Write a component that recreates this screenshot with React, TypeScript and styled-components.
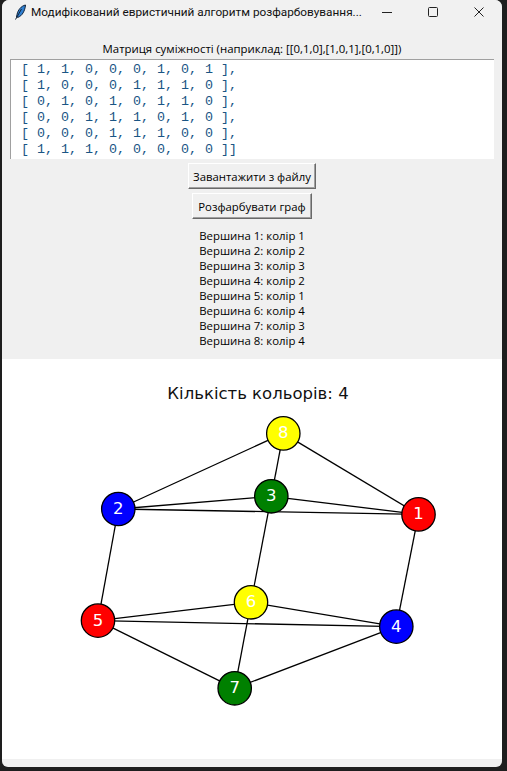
import React from "react";
import styled, { createGlobalStyle } from "styled-components";

const Global = createGlobalStyle`
  html, body { margin: 0; padding: 0; background: #1e1e1e; }
  #root { width: 507px; height: 771px; overflow: hidden; }
`;
const Screen = styled.div`
  width: 507px; height: 771px; padding: 0 5px 4px 2px; box-sizing: border-box; display: flex;
  background: #1e1e1e;
`;
const Win = styled.div`
  flex: 1; display: flex; flex-direction: column; background: #f0f0f0; border-radius: 7px 7px 6px 6px; overflow: hidden;
  font-family: "Open Sans", "Noto Sans", sans-serif; color: #000;
`;
const TitleBar = styled.div`
  height: 30px; flex: none; display: flex; align-items: center; background: #f1f1f1; padding: 0 0 6px 11px; box-sizing: border-box;
`;
const AppIcon = styled.svg`width: 14px; height: 16px; flex: none;`;
const Title = styled.div`
  margin-left: 4px; width: 346px; font-family: Roboto, "Noto Sans", sans-serif; font-size: 11.8px; white-space: nowrap; color: #111;
`;
const Ctrl = styled.svg`width: 12px; height: 12px; flex: none; margin-left: ${(p: { $ml: number }) => p.$ml}px;`;
const Body = styled.div`
  height: 329px; flex: none; display: flex; flex-direction: column; align-items: center;
`;
const Label = styled.div`
  margin-top: 10px; height: 18px; line-height: 18px; font-size: 11.4px; white-space: nowrap;
`;
const Matrix = styled.pre`
  margin: 1px 0 0 8px; align-self: flex-start; width: 484px; height: 100px; box-sizing: border-box; background: #fff;
  border-top: 1px solid #a0a0a0; border-left: 1px solid #a0a0a0; padding: 2px 0 0 10px; overflow: hidden;
  font-family: "Liberation Mono", monospace; font-size: 13.33px; line-height: 16px; color: #1a5585;
`;
const Btn = styled.button`
  display: block; height: 26px; box-sizing: border-box; margin-top: ${(p: { $mt: number; $w: number }) => p.$mt}px; width: ${(p) => p.$w}px;
  padding: 0; background: #f0f0f0; font: 11.35px "Open Sans", "Noto Sans", sans-serif; color: #000; white-space: nowrap;
  border: 1px solid; border-color: #fff #696969 #696969 #fff; box-shadow: inset -1px -1px 0 #a0a0a0;
`;
const Result = styled.div`
  margin-top: 9px; text-align: center; font-size: 11.4px; line-height: 15px; white-space: nowrap;
`;
const Canvas = styled.div`flex: none; height: 400px; background: #fff;`;
const Plot = styled.svg`display: block; width: 500px; height: 399px;`;

const rows = [
  "[ 1, 1, 0, 0, 0, 1, 0, 1 ],",
  "[ 1, 0, 0, 0, 1, 1, 1, 0 ],",
  "[ 0, 1, 0, 1, 0, 1, 1, 0 ],",
  "[ 0, 0, 1, 1, 1, 0, 1, 0 ],",
  "[ 0, 0, 0, 1, 1, 1, 0, 0 ],",
  "[ 1, 1, 1, 0, 0, 0, 0, 0 ]]",
];
const result = [1, 2, 3, 2, 1, 4, 3, 4];
const nodes: Record<number, { x: number; y: number; c: string }> = {
  1: { x: 416.5, y: 155.4, c: "#ff0000" },
  2: { x: 116.3, y: 150, c: "#0000ff" },
  3: { x: 269.3, y: 137.3, c: "#008000" },
  4: { x: 394.3, y: 267.6, c: "#0000ff" },
  5: { x: 96, y: 261.6, c: "#ff0000" },
  6: { x: 249, y: 243.3, c: "#ffff00" },
  7: { x: 232.7, y: 329.3, c: "#008000" },
  8: { x: 281.3, y: 74.4, c: "#ffff00" },
};
const edges = [[1,2],[1,3],[1,4],[1,8],[2,3],[2,5],[2,8],[3,6],[3,8],[4,5],[4,6],[4,7],[5,6],[5,7],[6,7]];

export default function App() {
  return (
    <Screen>
      <Global />
      <Win>
        <TitleBar>
          <AppIcon viewBox="0 0 14 16">
            <path d="M12.5 1C8 2 5 6 4 10.5l-.5 2.5 1.5.3C9 12 12 7 12.5 1Z" fill="#2f7fd0" stroke="#12233a" strokeWidth="1" />
            <path d="M2.5 15.5 8.5 5" stroke="#12233a" strokeWidth="1" />
          </AppIcon>
          <Title>Модифікований евристичний алгоритм розфарбовування...</Title>
          <Ctrl $ml={4} viewBox="0 0 12 12"><path d="M1 6.5h10" stroke="#222" fill="none" /></Ctrl>
          <Ctrl $ml={34} viewBox="0 0 12 12"><rect x="1.5" y="1.5" width="9" height="9" rx="1" stroke="#222" fill="none" /></Ctrl>
          <Ctrl $ml={34} viewBox="0 0 12 12"><path d="M1.5 1.5l9 9M10.5 1.5l-9 9" stroke="#222" fill="none" /></Ctrl>
        </TitleBar>
        <Body>
          <Label>Матриця суміжності (наприклад: [[0,1,0],[1,0,1],[0,1,0]])</Label>
          <Matrix>{rows.join("\n")}</Matrix>
          <Btn $mt={4} $w={128}>Завантажити з файлу</Btn>
          <Btn $mt={4} $w={120}>Розфарбувати граф</Btn>
          <Result>
            {result.map((c, i) => (
              <div key={i}>Вершина {i + 1}: колір {c}</div>
            ))}
          </Result>
        </Body>
        <Canvas>
          <Plot viewBox="0 0 500 399">
            <text x="256" y="40" textAnchor="middle" fontFamily="DejaVu Sans" fontSize="16.5" fill="#111">Кількість кольорів: 4</text>
            {edges.map(([a, b]) => (
              <line key={`${a}-${b}`} x1={nodes[a].x} y1={nodes[a].y} x2={nodes[b].x} y2={nodes[b].y} stroke="#000" strokeWidth="1.3" />
            ))}
            {Object.entries(nodes).map(([id, n]) => (
              <g key={id}>
                <circle cx={n.x} cy={n.y} r="16.7" fill={n.c} stroke="#000" strokeWidth="1.3" />
                <text x={n.x} y={n.y + 5} textAnchor="middle" fontFamily="DejaVu Sans" fontSize="16.5" fill="#fff">{id}</text>
              </g>
            ))}
          </Plot>
        </Canvas>
      </Win>
    </Screen>
  );
}
